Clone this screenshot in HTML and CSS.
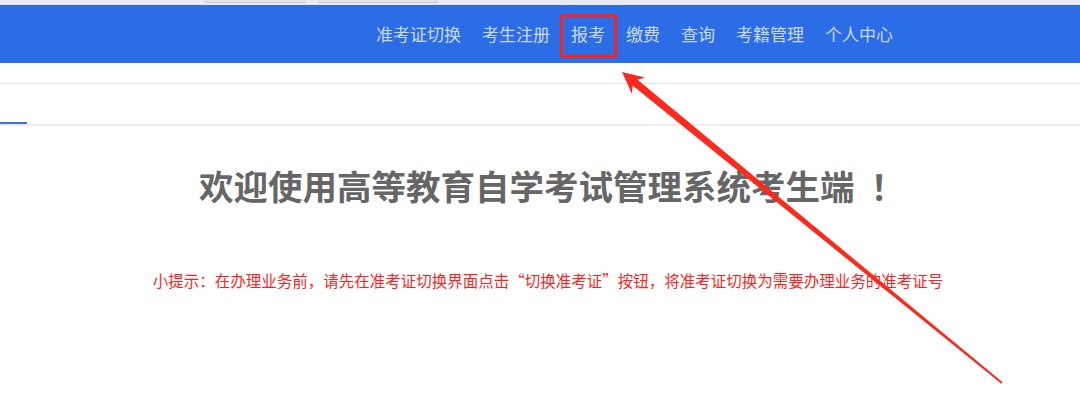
FILE: index.html
```html
<!DOCTYPE html>
<html lang="zh-CN">
<head>
    <meta charset="UTF-8">
    <meta name="viewport" content="width=device-width, initial-scale=1.0">
    <title>高等教育自学考试管理系统考生端</title>
    <link rel="stylesheet" href="styles.css">
</head>
<body>
    <div class="browser-strip">
        <span class="strip-tab tab-one"></span>
        <span class="strip-tab tab-two"></span>
    </div>

    <header class="top-bar">
        <ul class="main-nav">
            <li><a href="#">准考证切换</a></li>
            <li><a href="#">考生注册</a></li>
            <li class="marked"><a href="#">报考</a><span class="mark-box"></span></li>
            <li><a href="#">缴费</a></li>
            <li><a href="#">查询</a></li>
            <li><a href="#">考籍管理</a></li>
            <li><a href="#">个人中心</a></li>
        </ul>
    </header>

    <div class="sub-bar"></div>

    <div class="tab-row">
        <span class="tab-active"></span>
    </div>

    <main class="welcome">
        <h1 class="welcome-title">欢迎使用高等教育自学考试管理系统考生端<span class="bang">！</span></h1>
        <p class="welcome-tip">小提示：在办理业务前，请先在准考证切换界面点击“切换准考证”按钮，将准考证切换为需要办理业务的准考证号</p>
    </main>

    <!-- 标注箭头 -->
    <svg class="arrow" width="1080" height="401" viewBox="0 0 1080 401">
        <polygon points="622,72 645,77.5 637.5,79.8 1002.6,382.2 1001.4,383.8 632.6,85.6 632,94" fill="#fb2a1d"/>
    </svg>
</body>
</html>
```

FILE: styles.css
```css
body {
    margin: 0;
    padding: 0;
    background-color: #fff;
    font-family: "Microsoft YaHei", "Noto Sans CJK SC", sans-serif;
    position: relative;
    overflow: hidden;
    height: 401px;
}

.browser-strip {
    height: 5px;
    background-color: #e9ebf2;
    position: relative;
}

.strip-tab {
    position: absolute;
    top: 0;
    height: 2px;
    background-color: #e1e3e8;
    border-bottom: 1px solid #c9cbd0;
    border-radius: 0 0 3px 3px;
}

.tab-one {
    left: 204px;
    width: 103px;
}

.tab-two {
    left: 317px;
    width: 122px;
}

.top-bar {
    height: 58px;
    background-color: #2b6de7;
    display: flex;
    justify-content: flex-end;
    padding-right: 187px;
}

.main-nav {
    display: flex;
    gap: 21px;
    margin: 0;
    padding: 0;
    list-style: none;
}

.main-nav li {
    position: relative;
    line-height: 58px;
}

.main-nav li a {
    color: #cbd8f5;
    text-decoration: none;
    font-size: 17px;
}

.mark-box {
    position: absolute;
    top: 9px;
    bottom: 5px;
    left: -11px;
    right: -12px;
    border: 3px solid #f8231a;
    border-radius: 3px;
}

.sub-bar {
    height: 20px;
    border-bottom: 1px solid #e4e4e4;
}

.tab-row {
    height: 40px;
    border-bottom: 2px solid #ececec;
    display: flex;
    align-items: flex-end;
}

.tab-active {
    width: 27px;
    height: 2px;
    background-color: #3a74e6;
}

.welcome {
    text-align: center;
    padding-left: 16px;
}

.welcome-title {
    margin: 35px 0 0 0;
    font-size: 34.5px;
    font-weight: bold;
    color: #666;
    line-height: 48px;
}

.bang {
    margin-left: 16px;
    margin-right: -8px;
}

.welcome-tip {
    margin: 60px 0 0 0;
    font-size: 15.5px;
    color: #ff1f1f;
    line-height: 22px;
}

.arrow {
    position: absolute;
    top: 0;
    left: 0;
    pointer-events: none;
}
```
